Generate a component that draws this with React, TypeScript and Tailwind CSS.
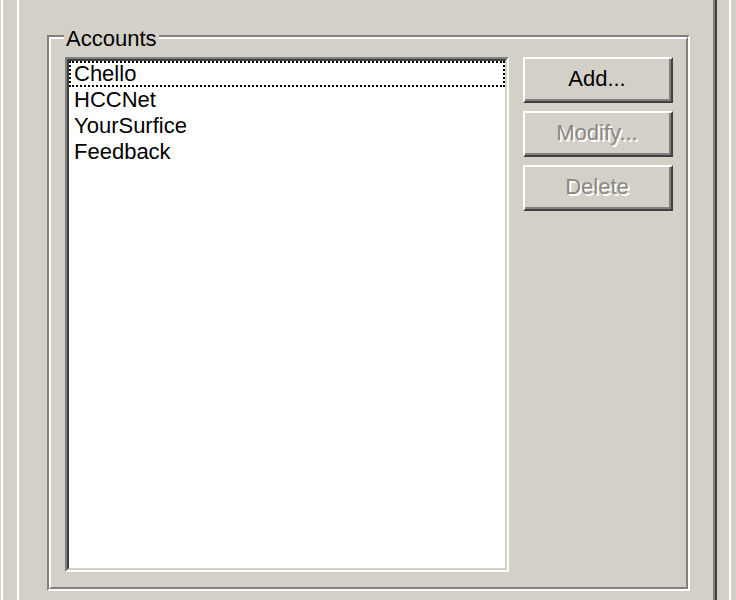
import React from "react";

const accounts = ["Chello", "HCCNet", "YourSurfice", "Feedback"];

function Button({ label, disabled }: { label: string; disabled?: boolean }) {
  return (
    <div className="h-[46px] w-[150px] border-2 border-t-white border-l-white border-r-[#404040] border-b-[#404040]">
      <div
        className={
          "flex h-full w-full items-center justify-center border-r-2 border-b-2 border-[#808080] " +
          (disabled ? "text-[#8c8984] [text-shadow:2px_2px_0_#ffffff]" : "text-black")
        }
      >
        {label}
      </div>
    </div>
  );
}

export default function App() {
  return (
    <div className="flex h-[600px] w-[736px] overflow-hidden bg-[#d4d0c8] font-['Liberation_Sans',Arial,sans-serif] text-[22px] leading-[26px] text-black">
      <div className="ml-px w-[2px] bg-white" />

      {/* tab page */}
      <div className="ml-[14px] h-full w-[700px] border-l-2 border-r-2 border-l-white border-r-[#404040]">
        <div className="h-full border-r-2 border-[#808080] pt-[35px] pl-[28px]">
          {/* group box */}
          <div className="relative h-[556px] w-[643px] border-2 border-t-[#808080] border-l-[#808080] border-r-white border-b-white">
            <div className="h-full w-full border-2 border-t-white border-l-white border-r-[#808080] border-b-[#808080]">
              <div className="flex pt-[18px] pl-[14px]">
                {/* list box */}
                <div className="h-[515px] w-[444px] border-2 border-t-[#808080] border-l-[#808080] border-r-white border-b-white">
                  <div className="h-full w-full border-2 border-t-[#404040] border-l-[#404040] border-r-[#d4d0c8] border-b-[#d4d0c8] bg-white">
                    {accounts.map((name, i) => (
                      <div
                        key={name}
                        className={
                          "h-[26px] pl-[3px] " +
                          (i === 0 ? "border-2 border-dotted border-black leading-[22px]" : "pl-[5px]")
                        }
                      >
                        {name}
                      </div>
                    ))}
                  </div>
                </div>

                <div className="ml-[14px] flex flex-col gap-[8px]">
                  <Button label="Add..." />
                  <Button label="Modify..." disabled />
                  <Button label="Delete" disabled />
                </div>
              </div>
            </div>
            <div className="absolute top-[-11px] left-[15px] bg-[#d4d0c8] px-[2px]">Accounts</div>
          </div>
        </div>
      </div>

      <div className="ml-[12px] w-[2px] bg-white" />
    </div>
  );
}
